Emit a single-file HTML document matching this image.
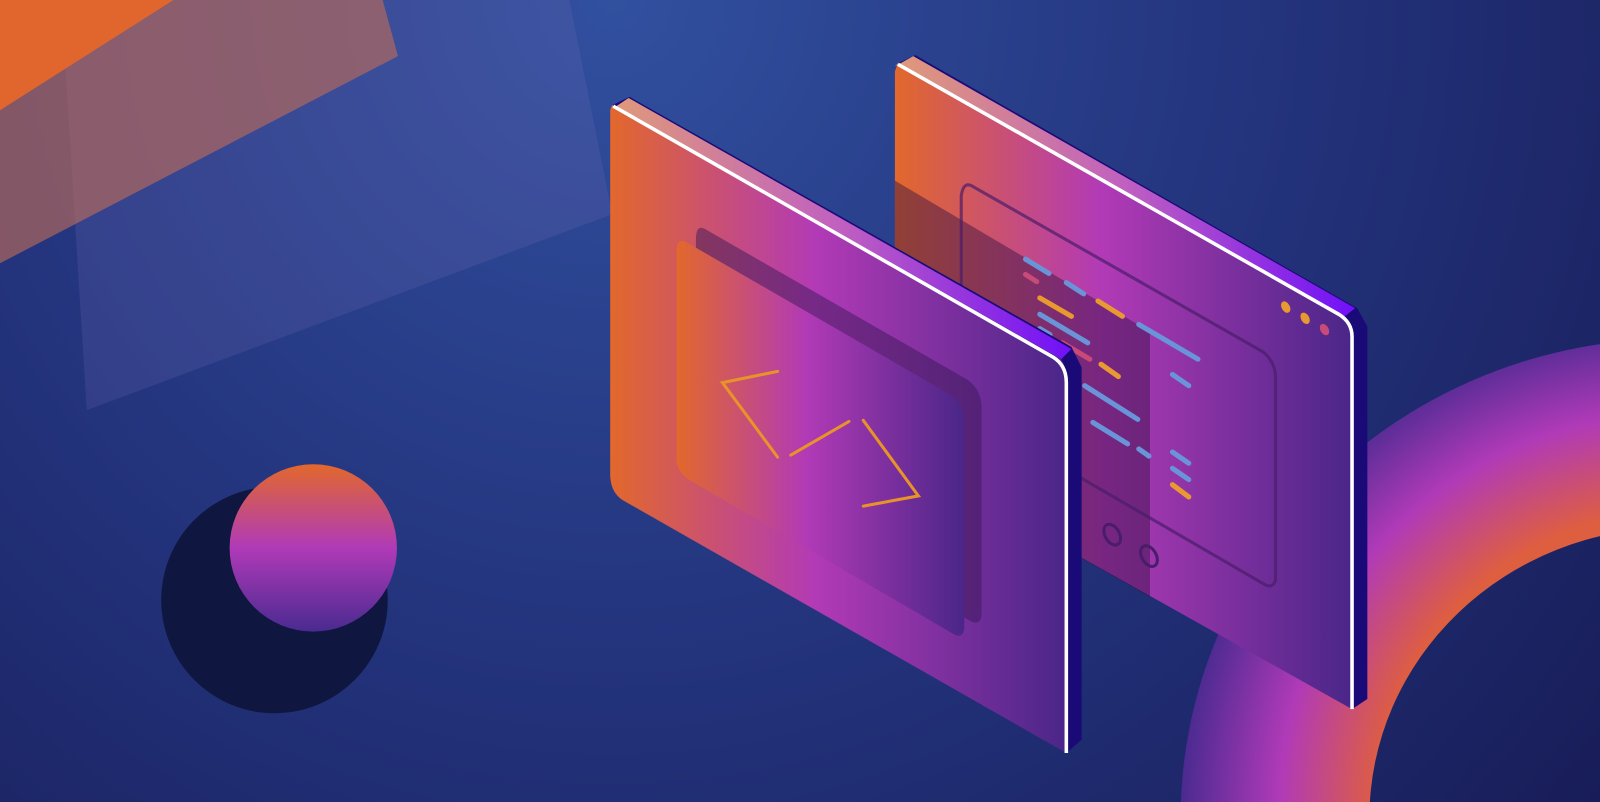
<!DOCTYPE html>
<html><head><meta charset="utf-8"><style>html,body{margin:0;padding:0;width:1600px;height:802px;overflow:hidden;background:#1e2a6e}</style></head>
<body>
<svg width="1600" height="802" viewBox="0 0 1568 786" preserveAspectRatio="none" xmlns="http://www.w3.org/2000/svg" style="display:block">
<defs>
<radialGradient id="bg" cx="600" cy="0" r="1300" gradientUnits="userSpaceOnUse">
<stop offset="0" stop-color="#31509f"/><stop offset="0.5" stop-color="#23337c"/><stop offset="1" stop-color="#171b55"/></radialGradient>
<linearGradient id="face" x1="0" y1="0" x2="1" y2="0">
<stop offset="0" stop-color="#e2682c"/><stop offset="0.45" stop-color="#b23ab6"/><stop offset="1" stop-color="#4a2688"/></linearGradient>
<linearGradient id="top" x1="0" y1="0" x2="1" y2="0">
<stop offset="0" stop-color="#e09a78"/><stop offset="0.5" stop-color="#c060c0"/><stop offset="1" stop-color="#7010f8"/></linearGradient>
<linearGradient id="ball" x1="0" y1="0" x2="0" y2="1">
<stop offset="0" stop-color="#e2682c"/><stop offset="0.5" stop-color="#b03ab8"/><stop offset="1" stop-color="#4a2a90"/></linearGradient>
<radialGradient id="ring" cx="1640" cy="792" r="483" gradientUnits="userSpaceOnUse">
<stop offset="0.6" stop-color="#de5e40"/><stop offset="0.8" stop-color="#b03ab8"/><stop offset="1" stop-color="#4a2a90"/></radialGradient>
</defs>
<rect width="1568" height="786" fill="url(#bg)"/>
<polygon points="60,0 558,0 600,210 85,402" fill="#7a70b8" opacity="0.2"/>
<polygon points="0,0 375,0 390,55 0,258" fill="#b86a5a" opacity="0.65"/>
<polygon points="0,0 170,0 0,108" fill="#e0662e"/>
<circle cx="269" cy="588" r="111" fill="#0f1640"/>
<circle cx="307" cy="537" r="82" fill="url(#ball)"/>
<path d="M1157,802 A483,470 0 0 1 1640,332 L1640,517 A298,285 0 0 0 1342,802 Z" fill="url(#ring)"/>

<polygon points="880,62 897,54 1330,302 1340,320 1340,685 1325,695 1320,320" fill="#1a0a78"/>
<polygon points="877,65 895,55 1328,302 1318,310 880,62" fill="url(#top)"/>
<polygon points="877,70 880,62 1318,310 1325,325 1325,695 877,444" fill="url(#face)"/>
<polygon points="877,177 1127,325 1127,585 877,444" fill="#301040" opacity="0.45"/>
<path d="M880,63 L1312,308 Q1325,316 1325,330 L1325,695" fill="none" stroke="#fff" stroke-width="3.5"/>
<path d="M952,182 L1238,345 Q1250,355 1250,370 L1250,568 Q1248,578 1238,572 L950,405 Q942,400 942,390 L942,192 Q944,178 952,182Z" fill="none" stroke="#4a1c6a" stroke-width="3" opacity="0.7"/>
<g stroke-linecap="round" stroke-width="5" fill="none">
<g stroke="#6a94d8"><path d="M1005,254 L1028,268"/><path d="M1045,277 L1062,288"/><path d="M1116,318 L1174,352"/><path d="M1019,308 L1066,336"/><path d="M1019,322 L1029,328"/><path d="M1063,378 L1115,411"/><path d="M1071,414 L1105,435"/><path d="M1116,440 L1126,447"/><path d="M1149,367 L1165,378"/><path d="M1149,443 L1165,454"/><path d="M1149,459 L1165,470"/></g>
<g stroke="#e89a30"><path d="M1019,292 L1050,310"/><path d="M1076,295 L1100,310"/><path d="M1079,357 L1096,369"/><path d="M1149,475 L1165,487"/></g>
<g stroke="#c84a78"><path d="M1005,269 L1016,276"/><path d="M1041,336 L1068,352"/></g>
</g>
<ellipse cx="1260" cy="301" rx="4" ry="6" fill="#e89a30" transform="rotate(-30 1260 301)"/>
<ellipse cx="1279" cy="312" rx="4" ry="6" fill="#e89a30" transform="rotate(-30 1279 312)"/>
<ellipse cx="1298" cy="323" rx="4" ry="6" fill="#c84a78" transform="rotate(-30 1298 323)"/>
<ellipse cx="1090" cy="524" rx="7" ry="11" fill="none" stroke="#4a1c6a" stroke-width="3" transform="rotate(-30 1090 524)"/>
<ellipse cx="1126" cy="545" rx="7" ry="11" fill="none" stroke="#4a1c6a" stroke-width="3" transform="rotate(-30 1126 545)"/>

<polygon points="600,103 617,95 1050,340 1060,360 1060,725 1045,738 1040,360" fill="#1a0a78"/>
<polygon points="598,108 616,96 1050,342 1040,352 600,103" fill="url(#top)"/>
<path d="M598,110 Q598,103 603,104 L1040,352 Q1045,360 1045,372 L1045,738 L610,490 Q598,482 598,465 Z" fill="url(#face)"/>
<path d="M601,104 L1032,350 Q1045,358 1045,375 L1045,738" fill="none" stroke="#fff" stroke-width="3.5"/>
<path d="M690,224 L948,372 Q962,382 962,400 L962,600 Q962,615 950,608 L690,460 Q682,455 682,445 L682,235 Q682,220 690,224Z" fill="#3a1858" opacity="0.5"/>
<path d="M672,237 L930,386 Q945,396 945,412 L945,615 Q944,628 932,620 L675,470 Q663,462 663,450 L663,245 Q664,233 672,237Z" fill="url(#face)"/>
<g stroke="#e8922a" stroke-width="3" stroke-linecap="round" fill="none">
<path d="M762,364 L708,375 L762,448"/>
<path d="M775,446 L832,413"/>
<path d="M846,412 L900,486 L846,496"/>
</g>
</svg>
</body></html>
